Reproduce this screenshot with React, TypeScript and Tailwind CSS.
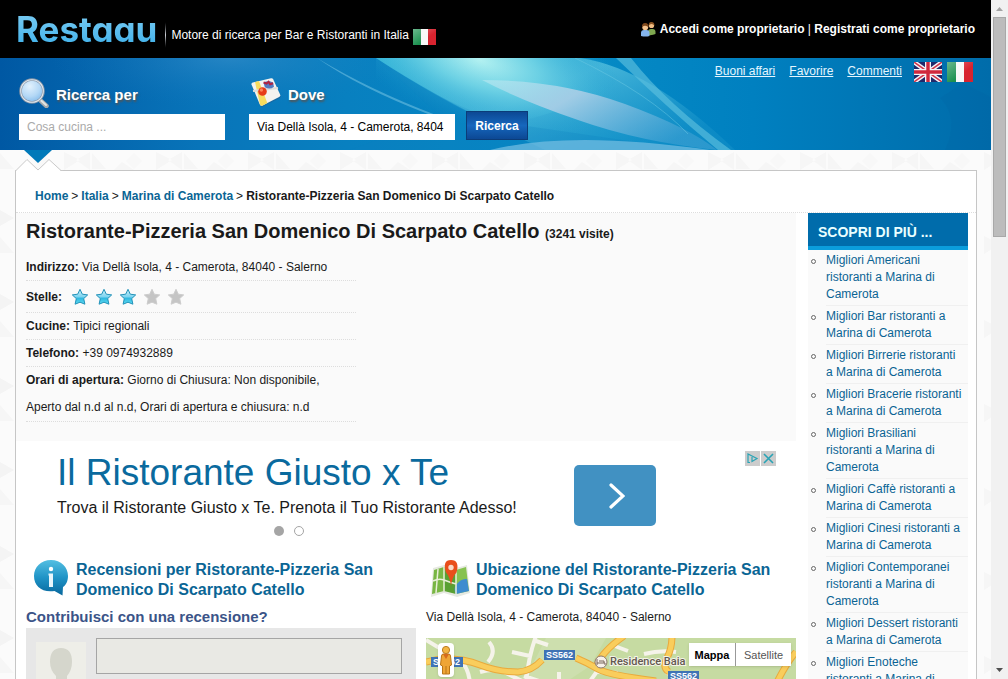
import type { ReactNode } from "react";

const facts = [
  { label: "Cucine:", value: "Tipici regionali" },
  { label: "Telefono:", value: "+39 0974932889" },
];

const related = [
  "Migliori Americani ristoranti a Marina di Camerota",
  "Migliori Bar ristoranti a Marina di Camerota",
  "Migliori Birrerie ristoranti a Marina di Camerota",
  "Migliori Bracerie ristoranti a Marina di Camerota",
  "Migliori Brasiliani ristoranti a Marina di Camerota",
  "Migliori Caffè ristoranti a Marina di Camerota",
  "Migliori Cinesi ristoranti a Marina di Camerota",
  "Migliori Contemporanei ristoranti a Marina di Camerota",
  "Migliori Dessert ristoranti a Marina di Camerota",
  "Migliori Enoteche ristoranti a Marina di Camerota",
];

function ItalianFlag({ className }: { className: string }) {
  return (
    <svg viewBox="0 0 26 20" preserveAspectRatio="none" className={className}>
      <defs>
        <linearGradient id="flagShine" x1="0" y1="0" x2="1" y2="1">
          <stop offset="0" stopColor="#fff" stopOpacity="0.35" />
          <stop offset="0.6" stopColor="#fff" stopOpacity="0" />
        </linearGradient>
      </defs>
      <rect width="9" height="20" fill="#1c9150" />
      <rect x="9" width="8" height="20" fill="#f8f8f8" />
      <rect x="17" width="9" height="20" fill="#d8232f" />
      <rect width="26" height="20" fill="url(#flagShine)" />
    </svg>
  );
}

function BritishFlag() {
  return (
    <svg viewBox="0 0 28 20" className="h-5 w-7">
      <rect width="28" height="20" fill="#21296b" />
      <path d="M0 0 28 20M28 0 0 20" stroke="#f4f4f8" strokeWidth="4.4" />
      <path d="M0 0 28 20M28 0 0 20" stroke="#d2354a" strokeWidth="1.5" />
      <path d="M14 0v20M0 10h28" stroke="#f4f4f8" strokeWidth="6" />
      <path d="M14 0v20M0 10h28" stroke="#d0283d" strokeWidth="3.4" />
    </svg>
  );
}

function UsersIcon() {
  return (
    <svg viewBox="0 0 16 16" className="size-4">
      <path d="M8 14v-3q0-3 3-3h1.500q3 0 3 3v2q-3 1.500-7.500 1z" fill="#7fa850" />
      <circle cx="11.500" cy="4.500" r="2.600" fill="#f0bd84" />
      <path d="M8.700 4.800Q8.300 1 11.500 1t2.900 3.800q-1-1.900-3-1.800-1.800 0-2.700 1.800z" fill="#8c5523" />
      <path d="M1 15v-3q0-3 3-3h2.500q3 0 3 3v3q-4 1-8.500 0z" fill="#84b4ec" />
      <circle cx="5.200" cy="6.200" r="2.900" fill="#f4c48e" />
      <path d="M2 6.500Q1.500 2 5.200 2t3.300 4.500Q7.400 4.600 5 4.700 3 4.600 2 6.500z" fill="#80491d" />
    </svg>
  );
}

function MagnifierIcon() {
  return (
    <svg viewBox="0 0 30 30" className="size-[30px]">
      <defs>
        <radialGradient id="lens" cx="0.4" cy="0.3" r="0.8">
          <stop offset="0" stopColor="#e2f1fd" />
          <stop offset="0.55" stopColor="#b4d8f6" />
          <stop offset="1" stopColor="#79b4e8" />
        </radialGradient>
      </defs>
      <path d="m21 22 6.500 6" stroke="#a5aaad" strokeWidth="4.500" strokeLinecap="round" />
      <path d="m21 21.500 6 5.500" stroke="#e4e5e2" strokeWidth="2" strokeLinecap="round" />
      <circle cx="13" cy="13" r="11.500" fill="url(#lens)" stroke="#8795a6" strokeWidth="2.600" />
      <circle cx="13" cy="13" r="11.300" fill="none" stroke="#dfe6ed" strokeWidth="1.100" />
    </svg>
  );
}

function PlaceIcon() {
  return (
    <svg viewBox="0 0 30 30" className="size-[30px]">
      <path d="M1 7.500Q.6 5.800 2.200 5.200L20 .8q1.800-.3 2.500 1.300l7 15.500q.6 1.600-1 2.600L12 28.600q-2.200.7-3-1.200z" fill="#25598c" opacity="0.5" />
      <path d="M.5 6.500Q.2 5 1.800 4.500L20 .2q1.600-.3 2.300 1.200l6.800 15.200q.6 1.500-1 2.400L11.600 27.500q-2 .8-2.800-1z" fill="#f4f3f0" />
      <path d="m4 4 4-1 8.300 22-4.500 2.400q-2 .8-2.800-1z" fill="#f7dc5e" />
      <path d="m2 13 25-3" stroke="#dddeda" strokeWidth="2" />
      <path d="M12.500 4.500q5-2.500 9.500 0l1 4.200q-4.200 3.500-9.200.6z" fill="#537bc0" />
      <path d="m12.600 4.500 3 1 2-1.700 1.500 2.400 3-1" stroke="#b02342" strokeWidth="2" fill="none" />
      <circle cx="11.500" cy="13.500" r="4.300" fill="#e73c19" />
      <circle cx="10.400" cy="12" r="1.700" fill="#fa8358" />
    </svg>
  );
}

function BandArt() {
  return (
    <svg viewBox="0 0 991 92" preserveAspectRatio="none" className="absolute inset-0 size-full">
      <defs>
        <linearGradient id="band" x1="0" x2="1" y1="0" y2="0">
          <stop offset="0" stopColor="#0058a3" />
          <stop offset="0.2" stopColor="#0874b9" />
          <stop offset="0.35" stopColor="#0880c0" />
          <stop offset="0.6" stopColor="#058ac5" />
          <stop offset="0.76" stopColor="#0080c0" />
          <stop offset="1" stopColor="#006caa" />
        </linearGradient>
        <radialGradient id="glow" gradientUnits="userSpaceOnUse" cx="0" cy="0" r="1" gradientTransform="translate(480 2) rotate(18) scale(150 66)">
          <stop offset="0" stopColor="#b2f1f1" />
          <stop offset="0.4" stopColor="#70d3e5" stopOpacity="0.85" />
          <stop offset="1" stopColor="#1ca1d2" stopOpacity="0" />
        </radialGradient>
        <radialGradient id="haze" gradientUnits="userSpaceOnUse" cx="0" cy="0" r="1" gradientTransform="translate(230 0) scale(180 50)">
          <stop offset="0" stopColor="#5aa0d6" stopOpacity="0.35" />
          <stop offset="1" stopColor="#1a78bc" stopOpacity="0" />
        </radialGradient>
        <linearGradient id="wing" x1="0" y1="0" x2="1" y2="0.6">
          <stop offset="0" stopColor="#3cc0dc" stopOpacity="0.9" />
          <stop offset="0.5" stopColor="#5cc4e0" stopOpacity="0.75" />
          <stop offset="1" stopColor="#1d97cc" stopOpacity="0.4" />
        </linearGradient>
        <linearGradient id="petal" x1="0" y1="0" x2="1" y2="0.5">
          <stop offset="0" stopColor="#c4ecf3" stopOpacity="0.5" />
          <stop offset="0.4" stopColor="#a5cde6" stopOpacity="0.95" />
          <stop offset="1" stopColor="#4ba6d6" stopOpacity="0.5" />
        </linearGradient>
      </defs>
      <rect width="991" height="92" fill="url(#band)" />
      <rect width="991" height="92" fill="url(#haze)" />
      <path d="M376 0Q440 42 545 92H735Q650 10 580 0z" fill="url(#wing)" />
      <path d="M376 0Q420 34 500 64L690 92H350L440 58z" fill="#0a80c0" opacity="0.25" />
      <path d="M376 0Q440 42 500 70L600 40 640 0z" fill="url(#glow)" />
      <rect x="376" width="360" height="92" fill="url(#glow)" opacity="0.5" />
      <path d="M482 22Q560 22 625 46T717 92Q640 84 578 62 520 42 482 22z" fill="url(#petal)" />
      <path d="M317 0Q370 32 436 57L428 56Q360 30 317 0z" fill="#8ed2ec" opacity="0.45" />
      <path d="M616 0h15Q667 46 731 92H718Q665 48 616 0z" fill="#5cc0de" opacity="0.65" />
      <path d="M575 0Q650 36 688 76" stroke="#72cbe4" strokeOpacity="0.45" fill="none" />
      <path d="M490 92Q570 72 710 92z" fill="#76bfe2" opacity="0.7" />
      <path d="M963 25 991 39V92H945Q960 60 940 40z" fill="#00599a" opacity="0.12" />
    </svg>
  );
}

function Star({ lit }: { lit: boolean }) {
  return (
    <svg viewBox="0 0 18 18" className="size-[18px]">
      <defs>
        <linearGradient id="litStar" x1="0" y1="0" x2="0" y2="1">
          <stop offset="0" stopColor="#c8effa" />
          <stop offset="0.5" stopColor="#7fd5f0" />
          <stop offset="0.6" stopColor="#2fb8e0" />
          <stop offset="1" stopColor="#5fdcf2" />
        </linearGradient>
      </defs>
      <path
        d="m9 1.300 2.300 4.900 5.400.7-4 3.700 1.200 5.600L9 14.200l-4.900 2 1.200-5.600-4-3.700 5.400-.7z"
        fill={lit ? "url(#litStar)" : "#c5c5c5"}
        stroke={lit ? "#2392b9" : "#cdcdcd"}
        strokeLinejoin="round"
      />
    </svg>
  );
}

function InfoBubble() {
  return (
    <svg viewBox="0 0 36 36" className="size-9 shrink-0">
      <defs>
        <linearGradient id="bubble" x1="0" y1="0" x2="0" y2="1">
          <stop offset="0" stopColor="#54bfe2" />
          <stop offset="0.5" stopColor="#1f93c6" />
          <stop offset="1" stopColor="#08679d" />
        </linearGradient>
      </defs>
      <path d="M18 0c10 0 17 7 17 16 0 5-2 9-5 11l-.5 8.500-8-4.500C9 33 1 26 1 16 1 7 8 0 18 0z" fill="url(#bubble)" />
      <circle cx="18" cy="9" r="2.200" fill="#fff" />
      <path d="M15.500 13.500H20V27h-4V15.500h-.5z" fill="#e8f6fc" />
    </svg>
  );
}

function MapPinIcon() {
  return (
    <svg viewBox="0 0 40 38" className="h-[38px] w-10 shrink-0">
      <path d="m3 8 11-3 12 3 11-3 3 28-13 4-13-4-13 4z" fill="#e6e9e1" />
      <path d="m4 10 10-3v24L2 34z" fill="#78b643" />
      <path d="m14 7 12 3v24l-12-3z" fill="#59a032" />
      <path d="m26 10 10-3 3 24-13 3z" fill="#86c250" />
      <path d="M26 25q5-7 11-6l2 12-13 3q-3-5 0-9z" fill="#3d8ccf" />
      <path d="M3 21q6-3 11-1t12 4M14 7v24M26 10v24M8 9 6 33" stroke="#e9efd8" strokeWidth="1.500" fill="none" />
      <path d="M21 26Q20 17 16 12.500 12 0 21 0t5.500 12.500Q22 17 21 26z" fill="#e94e1b" />
      <circle cx="21" cy="7.500" r="2.700" fill="#f9d9c6" />
    </svg>
  );
}

const mainRoads =
  "M0 24l14-3q22-1 40 6t38 7q14-1 24-12M150 20q12 5 22 11t58 12M170 30q4-15 28-32M246-2q0 12-5 22t2 14M370 14q-9 10-20 32";

function StreetMap() {
  return (
    <svg viewBox="0 0 370 200" preserveAspectRatio="xMidYMin slice" className="absolute inset-0 h-[200px] w-full">
      <rect width="370" height="200" fill="#c6dba2" />
      <path d="M120 0h60l-16 28-30 20-60 10 30-26z" fill="#cddfae" />
      <path
        d="M63 4q8 9-1 20M86 14l18 4M110-2q-8 22-10 48M110 3l12 4M36 24q7 8 8 22M0 2l20 12M54 34q14-4 24 0l20 10M98 38l18 6M186 7l16 6M218 16q16-4 32-2M133 34v12M172 34l20 1M172 32l-10 14M240 34l20 12"
        fill="none"
        stroke="#f5f3ea"
        strokeWidth="4"
      />
      <path d={mainRoads} fill="none" stroke="#e9a93c" strokeWidth="7" />
      <path d={mainRoads} fill="none" stroke="#f9cd5c" strokeWidth="5" />
      <g fill="#3f73b5">
        <rect x="5" y="19" width="32" height="10" />
        <rect x="118" y="12" width="31" height="10" />
        <rect x="242" y="33" width="31" height="10" />
      </g>
      <g fill="#fff" className="font-['Liberation_Sans'] text-[9px] font-bold">
        <text x="7" y="27">SS562</text>
        <text x="120" y="20">SS562</text>
        <text x="244" y="41">SS562</text>
      </g>
      <circle cx="175" cy="24" r="6" fill="#f7f1ea" stroke="#8b786a" />
      <path d="M171 21v6M171 25h8v2M173 23h5v2" stroke="#79665a" fill="none" />
      <text x="184" y="27" fill="#635850" stroke="#f3f4e8" strokeWidth="2" paintOrder="stroke" className="font-[Roboto] text-[11px] font-medium">
        Residence Baia
      </text>
    </svg>
  );
}

function Pegman() {
  return (
    <svg viewBox="0 0 16 34" className="h-[34px] w-4 rounded-sm bg-white shadow">
      <path d="M3.500 13q0-2 2-2h5q2 0 2 2l1 9-2 1v8h-7v-8l-2-1z" fill="#efa536" stroke="#b97517" />
      <path d="M8 23v8" stroke="#b97517" />
      <path d="m5 11 3 5 3-5z" fill="#d66b1c" />
      <circle cx="8" cy="7" r="3.600" fill="#f4b543" stroke="#ba7b22" />
    </svg>
  );
}

function Backdrop() {
  return (
    <svg className="absolute inset-0 size-full">
      <defs>
        <pattern id="facets" width="92" height="84" patternUnits="userSpaceOnUse">
          <path d="M0 3l14 16H0zM64 2v18l16-10zM90 2v18L76 10zM30 12l12 8H22z" fill="#f6f6f6" />
          <path d="M0 60l14 8-14 8zM24 36l18 12-18 12zM92 24v20L76 34z" fill="#f4f4f4" />
          <path d="M42 3l8 8-8 8-8-8z" fill="#f8f8f8" />
        </pattern>
      </defs>
      <rect width="100%" height="100%" fill="url(#facets)" />
    </svg>
  );
}

function SectionTitle({ children }: { children: ReactNode }) {
  return <h2 className="text-[16px] leading-5 font-bold text-[#0a6595]">{children}</h2>;
}

function Header() {
  return (
    <header className="flex h-[58px] justify-between bg-black px-4 text-white">
      <div className="flex items-center">
        <a
          href="#"
          className="bg-gradient-to-b from-[#8bd4f5] to-[#1fa9e8] bg-clip-text font-[Inter] text-[35px] leading-[58px] font-bold text-transparent [font-feature-settings:'cv11']"
        >
          Restaau
        </a>
        <div className="mt-3 ml-2 h-7 w-px bg-gradient-to-b from-black via-gray-300 to-black" />
        <p className="mt-3 ml-[5px]">Motore di ricerca per Bar e Ristoranti in Italia</p>
        <ItalianFlag className="mt-4 ml-1 h-4 w-[23px]" />
      </div>
      <div className="flex items-center gap-1 font-bold">
        <UsersIcon />
        <p>
          <a href="#">Accedi come proprietario</a> <span className="font-normal">|</span>{" "}
          <a href="#">Registrati come proprietario</a>
        </p>
      </div>
    </header>
  );
}

function SearchBand() {
  return (
    <div className="relative flex h-[92px] justify-between bg-[#0078b8] pr-[18px] pl-[19px]">
      <BandArt />
      <form className="relative flex items-end pb-[10px]">
        <div>
          <label htmlFor="what" className="flex items-center gap-[7px] pb-[6px] text-[15px] font-bold text-white [text-shadow:1px_2px_2px_#555]">
            <MagnifierIcon />
            <span className="pt-1">Ricerca per</span>
          </label>
          <input id="what" placeholder="Cosa cucina ..." className="block h-[26px] w-[206px] bg-white px-2 text-black placeholder:text-[#aaa]" />
        </div>
        <div className="ml-6">
          <label htmlFor="where" className="flex items-center gap-[7px] pb-[6px] pl-[2px] text-[15px] font-bold text-white [text-shadow:1px_2px_2px_#555]">
            <PlaceIcon />
            <span className="pt-1">Dove</span>
          </label>
          <input id="where" defaultValue="Via Dellà Isola, 4 - Camerota, 8404" className="block h-[26px] w-[206px] bg-white px-2 text-black" />
        </div>
        <button type="submit" className="ml-[11px] h-[29px] w-[62px] border border-[#0b3c78] bg-gradient-to-b from-[#0c4894] via-[#1667bd] to-[#0c4894] font-bold text-white">
          Ricerca
        </button>
      </form>
      <nav className="relative flex items-start pt-1 text-[#e4f6ff]">
        <a href="#" className="mr-[14px] leading-[18px] underline">Buoni affari</a>
        <a href="#" className="mr-[14px] leading-[18px] underline">Favorire</a>
        <a href="#" className="mr-3 leading-[18px] underline">Commenti</a>
        <a href="#" aria-label="English"><BritishFlag /></a>
        <a href="#" aria-label="Italiano" className="ml-[5px]"><ItalianFlag className="h-5 w-[26px]" /></a>
      </nav>
    </div>
  );
}

function Details() {
  return (
    <section className="h-[228px] bg-[#fafafa] pl-[10px]">
      <h1 className="text-[20px] leading-9 font-bold">
        Ristorante-Pizzeria San Domenico Di Scarpato Catello{" "}
        <span className="text-[12px]">(3241 visite)</span>
      </h1>
      <div className="w-[330px] pt-[2px] leading-[26px]">
        <p className="border-b border-dotted border-[#ddd]"><b>Indirizzo:</b> Via Dellà Isola, 4 - Camerota, 84040 - Salerno</p>
        <div className="flex h-8 items-center border-b border-dotted border-[#ddd]">
          <b>Stelle:</b>
          <div className="ml-[9px] flex gap-[6px]">
            {[1, 2, 3, 4, 5].map((n) => (
              <Star key={n} lit={n <= 3} />
            ))}
          </div>
        </div>
        {facts.map((fact) => (
          <p key={fact.label} className="border-b border-dotted border-[#ddd]">
            <b>{fact.label}</b> {fact.value}
          </p>
        ))}
        <p className="border-b border-dotted border-[#ddd] leading-[27px]">
          <b>Orari di apertura:</b> Giorno di Chiusura: Non disponibile,
          <br />
          Aperto dal n.d al n.d, Orari di apertura e chiusura: n.d
        </p>
      </div>
    </section>
  );
}

function Advert() {
  return (
    <section className="flex h-[116px] items-start pr-5 pl-[41px]">
      <div className="w-[517px]">
        <h2 className="pt-2 text-[37px] leading-[48px] text-[#0a6a9e]">Il Ristorante Giusto x Te</h2>
        <p className="text-[16px] leading-[22px]">Trova il Ristorante Giusto x Te. Prenota il Tuo Ristorante Adesso!</p>
        <div className="flex justify-center gap-[10px] pt-[7px] pr-[53px]">
          <span className="size-[10px] rounded-full bg-[#a5a5a5]" />
          <span className="size-[10px] rounded-full border border-[#a5a5a5]" />
        </div>
      </div>
      <button aria-label="Avanti" className="mt-6 flex h-[61px] w-[82px] items-center justify-center rounded-[5px] bg-[#4191c2]">
        <svg viewBox="0 0 16 26" className="ml-1 h-[26px] w-4" fill="none" stroke="#fff" strokeWidth="3.200" strokeLinecap="round">
          <path d="m2 2 12 11L2 24" />
        </svg>
      </button>
      <div className="mt-[10px] ml-auto flex gap-px">
        <svg viewBox="0 0 15 15" className="size-[15px] bg-[#ccc]" fill="none" stroke="#29a3b5" strokeWidth="1.200">
          <path d="M5 11.500H3V3l9 4.500-5 3V6" />
        </svg>
        <svg viewBox="0 0 15 15" className="size-[15px] bg-[#ccc]" fill="none" stroke="#29a3b5" strokeWidth="1.600">
          <path d="m3 3 9 9M12 3l-9 9" />
        </svg>
      </div>
    </section>
  );
}

function Reviews() {
  return (
    <section className="min-w-0 flex-1">
      <div className="flex h-[51px] gap-[7px] pt-[3px] pl-[7px]">
        <InfoBubble />
        <SectionTitle>Recensioni per Ristorante-Pizzeria San Domenico Di Scarpato Catello</SectionTitle>
      </div>
      <h3 className="h-5 text-[15px] leading-[18px] font-bold text-[#3b5488]">
        <label htmlFor="review">Contribuisci con una recensione?</label>
      </h3>
      <div className="flex h-40 gap-[10px] bg-[#e7e7e7] p-[10px] pr-[14px]">
        <svg viewBox="0 0 50 50" className="mt-1 size-[50px] shrink-0">
          <rect width="50" height="50" fill="#eeeee8" />
          <path d="M14 20q0-14 11-14t11 14q0 8-5 14v6l14 10H6l14-10v-6q-6-6-6-14z" fill="#d5d6cc" />
        </svg>
        <textarea id="review" className="h-9 min-w-0 flex-1 resize-none border border-[#a5a5a5] bg-[#e9e9e4]" />
      </div>
    </section>
  );
}

function Location() {
  return (
    <section className="w-[370px]">
      <div className="flex h-[51px] gap-[6px] pt-[3px] pl-1">
        <MapPinIcon />
        <SectionTitle>Ubicazione del Ristorante-Pizzeria San Domenico Di Scarpato Catello</SectionTitle>
      </div>
      <p className="h-[30px] leading-[18px]">Via Dellà Isola, 4 - Camerota, 84040 - Salerno</p>
      <div className="relative flex h-[200px] items-start justify-between pt-[5px] pr-[5px] pl-3">
        <StreetMap />
        <div className="relative"><Pegman /></div>
        <div className="relative flex h-[23px] bg-white text-[11px] shadow">
          <button className="w-[47px] border-r border-[#999] font-bold text-black">Mappa</button>
          <button className="w-[55px] text-[#555]">Satellite</button>
        </div>
      </div>
    </section>
  );
}

function Sidebar() {
  return (
    <aside className="w-40 shrink-0 bg-[#fafafa]">
      <h2 className="h-[37px] border-b-4 border-[#0b9ddc] bg-[#006cab] pl-[10px] text-[14px] leading-[38px] font-bold text-[#eaffff]">
        SCOPRI DI PIÙ ...
      </h2>
      <ul>
        {related.map((text) => (
          <li key={text} className="flex pl-[3px] leading-[17px]">
            <span className="mt-[9px] mr-[10px] size-[5px] shrink-0 rounded-full border border-[#666]" />
            <a href="#" className="flex-1 border-b border-[#f0f0f0] py-[2px] pr-1 text-[#0a6494]">{text}</a>
          </li>
        ))}
      </ul>
    </aside>
  );
}

function Scrollbar() {
  return (
    <div className="flex w-[17px] shrink-0 flex-col items-center bg-[#f1f1f1]">
      <svg viewBox="0 0 17 17" className="size-[17px]"><path d="m5 11 3.500-4 3.500 4z" fill="#a3a3a3" /></svg>
      <div className="h-[220px] w-[13px] border border-[#a8a8a8] bg-[#bcbcbc]" />
      <svg viewBox="0 0 17 17" className="mt-auto size-[17px]"><path d="m5 6 3.500 4L12 6z" fill="#505050" /></svg>
    </div>
  );
}

export default function App() {
  return (
    <div className="flex h-screen overflow-hidden bg-white font-['Liberation_Sans',Arial,sans-serif] text-[12px] leading-[18px] text-[#1a1a1a]">
      <div className="min-w-0 flex-1 overflow-hidden">
        <Header />
        <SearchBand />
        <div className="relative bg-[#fbfbfb] pr-[14px] pl-[15px]">
          <Backdrop />
          <svg viewBox="0 0 48 21" className="relative z-10 -mb-px h-[21px] w-12">
            <path d="M.5 21 12 9.500 23 20 34 9.500 46 21z" fill="#fff" />
            <path d="M.5 21 12 9.500 23 20 34 9.500 46 20.500h2" fill="none" stroke="#c9c9c9" />
            <path d="M9 0 23 13 37 0z" fill="#0079b9" />
          </svg>
          <main className="relative border border-[#c6c6c6] bg-white">
            <nav className="flex h-[42px] gap-[3px] border-b border-dotted border-[#ddd] pt-4 pl-[19px]">
              <a href="#" className="font-bold text-[#0a6595]">Home</a>
              <span>&gt;</span>
              <a href="#" className="font-bold text-[#0a6595]">Italia</a>
              <span>&gt;</span>
              <a href="#" className="font-bold text-[#0a6595]">Marina di Camerota</a>
              <span>&gt;</span>
              <b>Ristorante-Pizzeria San Domenico Di Scarpato Catello</b>
            </nav>
            <div className="flex gap-3 pr-2">
              <div className="min-w-0 flex-1">
                <Details />
                <Advert />
                <div className="flex gap-[10px] pl-[10px]">
                  <Reviews />
                  <Location />
                </div>
              </div>
              <Sidebar />
            </div>
          </main>
        </div>
      </div>
      <Scrollbar />
    </div>
  );
}
